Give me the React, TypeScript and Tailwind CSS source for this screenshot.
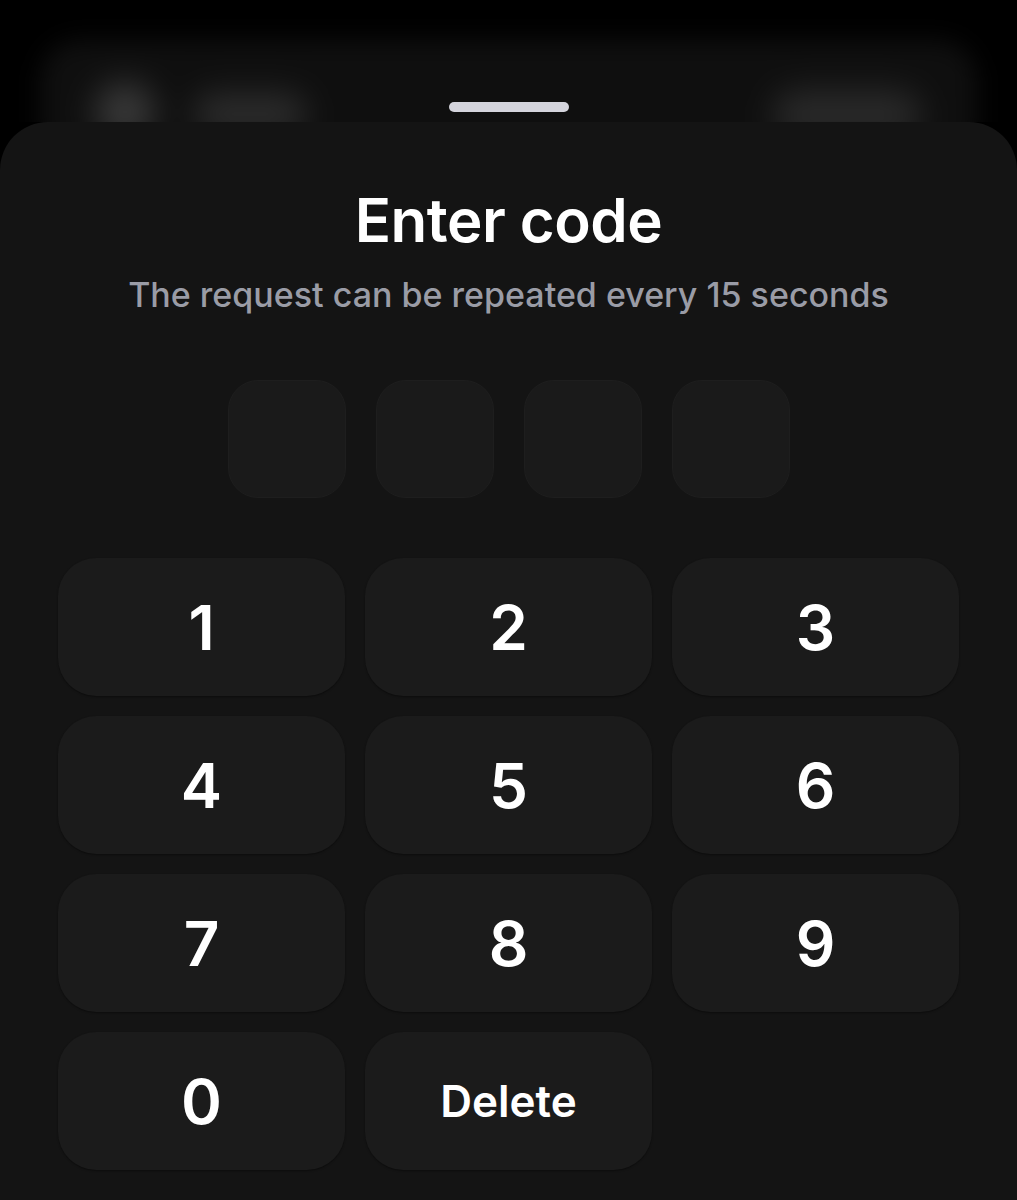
import React from 'react'

const keys = ['1', '2', '3', '4', '5', '6', '7', '8', '9', '0', 'Delete']

export default function App() {
  return (
    <div className="h-[1200px] overflow-hidden bg-black" style={{ fontFamily: 'Inter, "Noto Sans", sans-serif' }}>
      {/* blurred page behind the sheet */}
      <div className="relative h-[122px] overflow-hidden bg-black pt-[40px]">
        <div className="mx-[40px] flex h-[120px] items-start gap-[40px] rounded-[40px] bg-[#0f0f0f] px-[55px] pt-[42px] blur-md">
          <div className="h-[60px] w-[60px] rounded-full bg-[#3a3a3a] blur-md" />
          <div className="mt-[12px] h-[40px] w-[110px] rounded-[14px] bg-[#2e2e2e] blur-md" />
          <div className="mt-[8px] ml-auto h-[50px] w-[150px] rounded-full bg-[#2a2a2a] blur-md" />
        </div>
        <div className="absolute left-1/2 top-[102px] h-[10px] w-[120px] -translate-x-1/2 rounded-full bg-[#d4d4dc]" />
      </div>

      <div className="h-[1078px] rounded-t-[48px] bg-[#141414] pt-[62px]">
        <h1 className="text-center text-[60px] font-semibold leading-[72px] tracking-[-0.5px] text-white">Enter code</h1>
        <p className="mt-[18px] text-center text-[34px] font-medium leading-[42px] text-[#9a9ca6]">The request can be repeated every 15 seconds</p>

        <div className="mt-[64px] flex justify-center gap-[30px]">
          {[0, 1, 2, 3].map(i => (
            <div key={i} className="h-[118px] w-[118px] rounded-[30px] border border-[#1e1e1e] bg-[#1a1a1a]" />
          ))}
        </div>

        <div className="mt-[60px] grid grid-cols-3 gap-x-[20px] gap-y-[20px] px-[58px]">
          {keys.map(k => (
            <button
              key={k}
              className={`flex h-[138px] items-center justify-center rounded-[38px] bg-[#1b1b1b] text-white shadow-[0_1px_2px_rgba(0,0,0,0.4)] ${k === 'Delete' ? 'text-[44px] font-semibold' : 'text-[62px] font-semibold'}`}
            >
              {k}
            </button>
          ))}
        </div>
      </div>
    </div>
  )
}
